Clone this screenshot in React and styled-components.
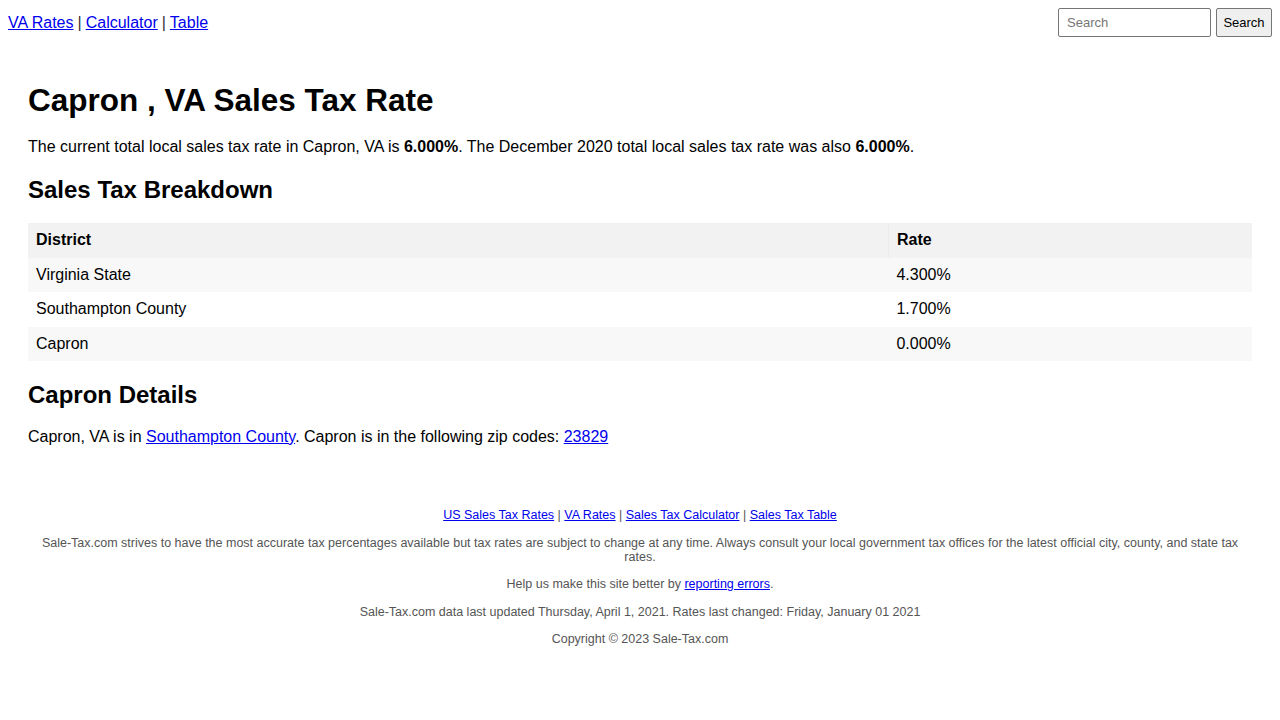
import React from 'react';
import styled, { createGlobalStyle } from 'styled-components';

const GlobalStyle = createGlobalStyle`
  body {
    margin: 8px;
    font-family: "Liberation Sans", Arial, sans-serif;
    color: #000;
    background: #fff;
  }
  a { color: #0000ee; }
`;

const Nav = styled.nav`
  display: flex;
  justify-content: space-between;
  align-items: center;
  height: 29px;
  font-size: 16px;
`;

const NavLinks = styled.div`
  display: flex;
  align-items: center;
  gap: 4px;
`;

const Sep = styled.span`
  color: ${p => (p.$muted ? '#555' : '#333')};
`;

const SearchForm = styled.form`
  display: flex;
  align-items: center;
  gap: 5px;
`;

const SearchInput = styled.input`
  width: 153px;
  height: 29px;
  box-sizing: border-box;
  border: 1px solid #767676;
  border-radius: 2px;
  padding: 0 8px;
  font-family: "Liberation Sans", Arial, sans-serif;
  font-size: 13px;
  &::placeholder { color: #757575; }
`;

const SearchButton = styled.button`
  width: 56px;
  height: 29px;
  box-sizing: border-box;
  padding: 0;
  border: 1px solid #767676;
  border-radius: 2px;
  background: #efefef;
  font-family: "Liberation Sans", Arial, sans-serif;
  font-size: 13px;
  color: #000;
`;

const Container = styled.main`
  padding: 24px 20px 20px;
`;

const Title = styled.h1`
  font-size: 31.5px;
  margin: 21px 0 19px;
`;

const Heading = styled.h2`
  font-size: 24px;
  margin: 20px 0 19px;
`;

const Text = styled.p`
  font-size: 16px;
  margin: 16px 0;
`;

const Table = styled.table`
  width: 100%;
  border-collapse: collapse;
  font-size: 16px;
  line-height: 18.5px;
`;

const Th = styled.th`
  text-align: left;
  padding: 8px;
  background: #f2f2f2;
  width: ${p => p.$w || 'auto'};
  border-right: ${p => (p.$divider ? '1px solid #ececec' : 'none')};
`;

const Row = styled.tr`
  background: ${p => (p.$striped ? '#f8f8f8' : '#fff')};
`;

const Td = styled.td`
  padding: 8px;
`;

const Footer = styled.footer`
  display: flex;
  flex-direction: column;
  align-items: center;
  gap: 13.5px;
  margin-top: 16px;
  padding-top: 46px;
  font-size: 12.5px;
  line-height: 14px;
  color: #555;
  text-align: center;
`;

const FootLine = styled.div``;

const rates = [
  { district: 'Virginia State', rate: '4.300%' },
  { district: 'Southampton County', rate: '1.700%' },
  { district: 'Capron', rate: '0.000%' },
];

export default function App() {
  return (
    <>
      <GlobalStyle />
      <Nav>
        <NavLinks>
          <a href="#">VA Rates</a>
          <Sep>|</Sep>
          <a href="#">Calculator</a>
          <Sep>|</Sep>
          <a href="#">Table</a>
        </NavLinks>
        <SearchForm onSubmit={e => e.preventDefault()}>
          <SearchInput placeholder="Search" />
          <SearchButton>Search</SearchButton>
        </SearchForm>
      </Nav>

      <Container>
        <Title>Capron , VA Sales Tax Rate</Title>
        <Text>
          The current total local sales tax rate in Capron, VA is <b>6.000%</b>. The December 2020 total local sales
          tax rate was also <b>6.000%</b>.
        </Text>

        <Heading>Sales Tax Breakdown</Heading>
        <Table>
          <thead>
            <tr>
              <Th $w="70.3%" $divider>District</Th>
              <Th>Rate</Th>
            </tr>
          </thead>
          <tbody>
            {rates.map((r, i) => (
              <Row key={r.district} $striped={i % 2 === 0}>
                <Td>{r.district}</Td>
                <Td>{r.rate}</Td>
              </Row>
            ))}
          </tbody>
        </Table>

        <Heading>Capron Details</Heading>
        <Text>
          Capron, VA is in <a href="#">Southampton County</a>. Capron is in the following zip codes:{' '}
          <a href="#">23829</a>
        </Text>

        <Footer>
          <FootLine>
            <a href="#">US Sales Tax Rates</a> <Sep $muted>|</Sep> <a href="#">VA Rates</a> <Sep $muted>|</Sep>{' '}
            <a href="#">Sales Tax Calculator</a> <Sep $muted>|</Sep> <a href="#">Sales Tax Table</a>
          </FootLine>
          <FootLine>
            Sale-Tax.com strives to have the most accurate tax percentages available but tax rates are subject to change
            at any time. Always consult your local government tax offices for the latest official city, county, and
            state tax rates.
          </FootLine>
          <FootLine>
            Help us make this site better by <a href="#">reporting errors</a>.
          </FootLine>
          <FootLine>
            Sale-Tax.com data last updated Thursday, April 1, 2021. Rates last changed: Friday, January 01 2021
          </FootLine>
          <FootLine>Copyright © 2023 Sale-Tax.com</FootLine>
        </Footer>
      </Container>
    </>
  );
}
